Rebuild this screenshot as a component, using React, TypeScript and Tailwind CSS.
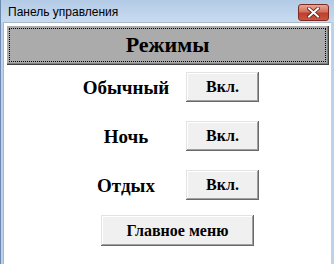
const MODES = ['Обычный', 'Ночь', 'Отдых'];

const btn =
  "bg-[#f0f0f0] shadow-[inset_-1px_-1px_#696969,inset_1px_1px_#e3e3e3,inset_-2px_-2px_#a0a0a0,inset_2px_2px_#ffffff] flex items-center justify-center";

function WinButton({ label, className }: { label: string; className: string }) {
  return (
    <div className={`${btn} ${className}`}>
      <span className="font-['Liberation_Serif',serif] font-bold text-[16px] text-black leading-none">{label}</span>
    </div>
  );
}

export default function App() {
  return (
    <div className="w-[334px] h-[264px] flex flex-col bg-[#bcd2ec] border-l border-[#6d8bb0] font-['Liberation_Serif',serif]">
      {/* Title bar */}
      <div className="h-[22px] flex items-center justify-between pl-[7px] pr-[5px] bg-[linear-gradient(#b3cae6,#c8dbf0)]">
        <span className="font-['Liberation_Sans',sans-serif] text-[12px] text-black leading-none pt-[2px]">
          Панель управления
        </span>
        <div className="w-[31px] h-[17px] mt-[4px] self-start rounded-[3px] border border-[#7e2a20] bg-[linear-gradient(#e8a597,#d3705c_45%,#bd3f2b_55%,#c9563f)] flex items-center justify-center">
          <svg width="13" height="11" viewBox="0 0 13 11">
            <path d="M2 1.5 L11 9.5 M11 1.5 L2 9.5" stroke="#5a1d14" strokeWidth="3.6" strokeLinecap="square" />
            <path d="M2 1.5 L11 9.5 M11 1.5 L2 9.5" stroke="#ffffff" strokeWidth="2" strokeLinecap="square" />
          </svg>
        </div>
      </div>

      {/* Client area */}
      <div className="flex-1 mr-[3px] ml-[2px] bg-white border-t border-l border-[#a9b8c9] flex flex-col">
        <div className="mx-[2px] mt-[2px] h-[40px] bg-[#ababab] shadow-[inset_1px_1px_#ffffff,inset_-1px_-1px_#404040,inset_-2px_-2px_#808080] p-[3px]">
          <div className="h-full border border-dotted border-black flex items-center justify-center">
            <span className="text-[22px] font-bold text-black leading-none">Режимы</span>
          </div>
        </div>

        <div className="ml-[67px] mt-[7px] flex flex-col gap-[19px]">
          {MODES.map((m) => (
            <div key={m} className="grid grid-cols-[110px_73px] gap-[5px] items-center">
              <span className="text-center text-[19px] font-bold text-black leading-none">{m}</span>
              <WinButton label="Вкл." className="h-[30px]" />
            </div>
          ))}
        </div>

        <WinButton label="Главное меню" className="ml-[97px] mt-[15px] w-[153px] h-[31px]" />
      </div>
    </div>
  );
}
